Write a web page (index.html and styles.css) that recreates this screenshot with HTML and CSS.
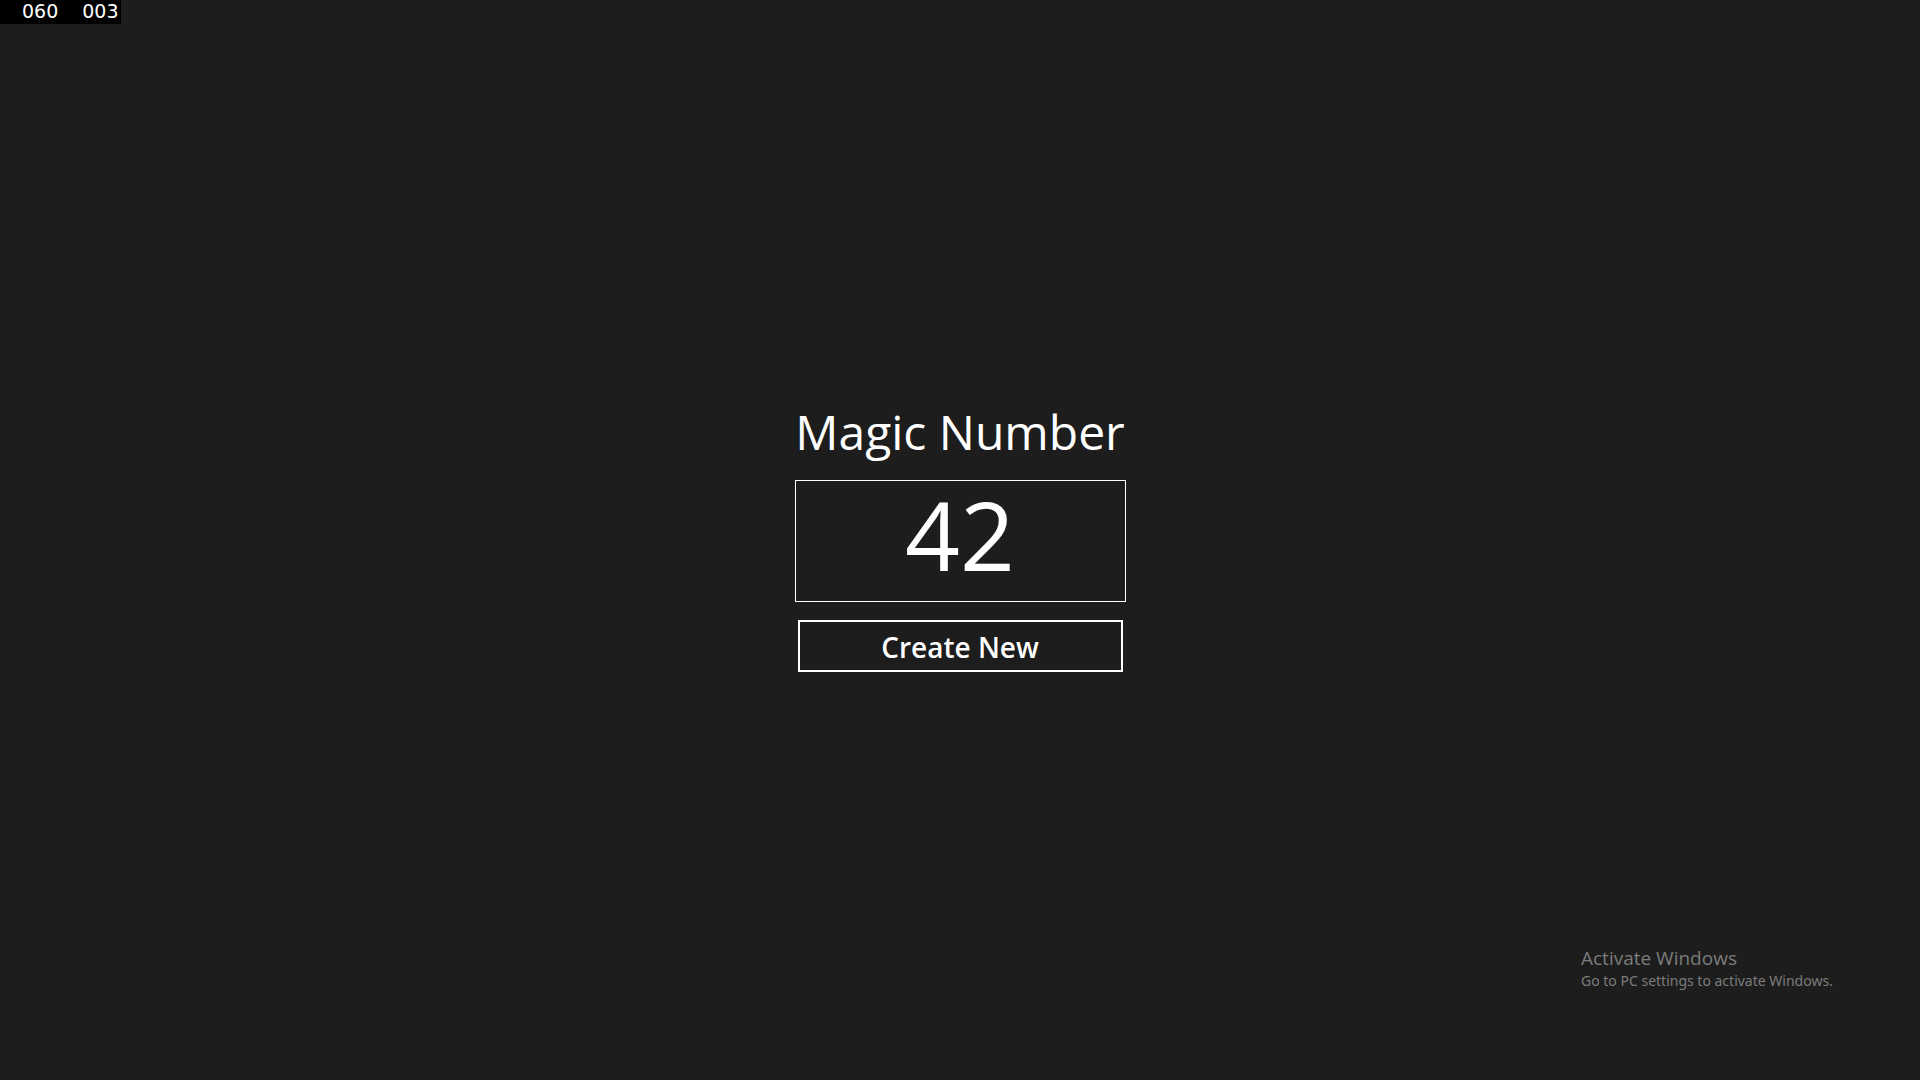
FILE: index.html
```html
<!DOCTYPE html>
<html lang="en">
<head>
<meta charset="utf-8">
<title>Magic Number</title>
<link rel="stylesheet" href="styles.css">
</head>
<body>
<div class="counters"><span>060</span><span>003</span></div>
<main class="page">
  <section class="panel">
    <h1 class="title">Magic Number</h1>
    <output class="number">42</output>
    <button class="create" type="button">Create New</button>
  </section>
</main>
<aside class="watermark">
  <p class="watermark-title">Activate Windows</p>
  <p class="watermark-text">Go to PC settings to activate Windows.</p>
</aside>
</body>
</html>
```
FILE: styles.css
```css
* { box-sizing: border-box; }
body {
  margin: 0;
  background: #1d1d1d;
  color: #fff;
  font-family: "Segoe UI", "Open Sans", sans-serif;
}
.page {
  min-height: 100vh;
  display: flex;
  align-items: center;
  justify-content: center;
}
.panel {
  display: flex;
  flex-direction: column;
  width: 331px;
  padding-bottom: 4px;
}
.title {
  margin: 0 0 20px;
  font-size: 48px;
  line-height: 56px;
  font-weight: 400;
  text-align: center;
  white-space: nowrap;
}
.number {
  height: 122px;
  border: 1px solid #fff;
  font-size: 96px;
  line-height: 106px;
  text-align: center;
}
.create {
  height: 52px;
  margin: 18px 3px 0;
  padding: 2px 0 0;
  border: 2px solid #fff;
  background: transparent;
  color: #fff;
  font: inherit;
  font-size: 28px;
  font-weight: 600;
}
.counters {
  position: absolute;
  top: 0;
  left: 0;
  display: flex;
  gap: 24px;
  padding: 0 2px 2px 22px;
  background: #000;
  font-family: "DejaVu Sans", sans-serif;
  font-size: 19px;
  line-height: 22px;
}
.watermark {
  position: absolute;
  right: 84px;
  bottom: 88px;
  width: 255px;
  color: #7c7c7c;
}
.watermark p { margin: 0; }
.watermark-title { font-size: 19px; line-height: 24px; }
.watermark-text { font-family: "Segoe UI", "Noto Sans", sans-serif; font-size: 14px; line-height: 22px; }
```
